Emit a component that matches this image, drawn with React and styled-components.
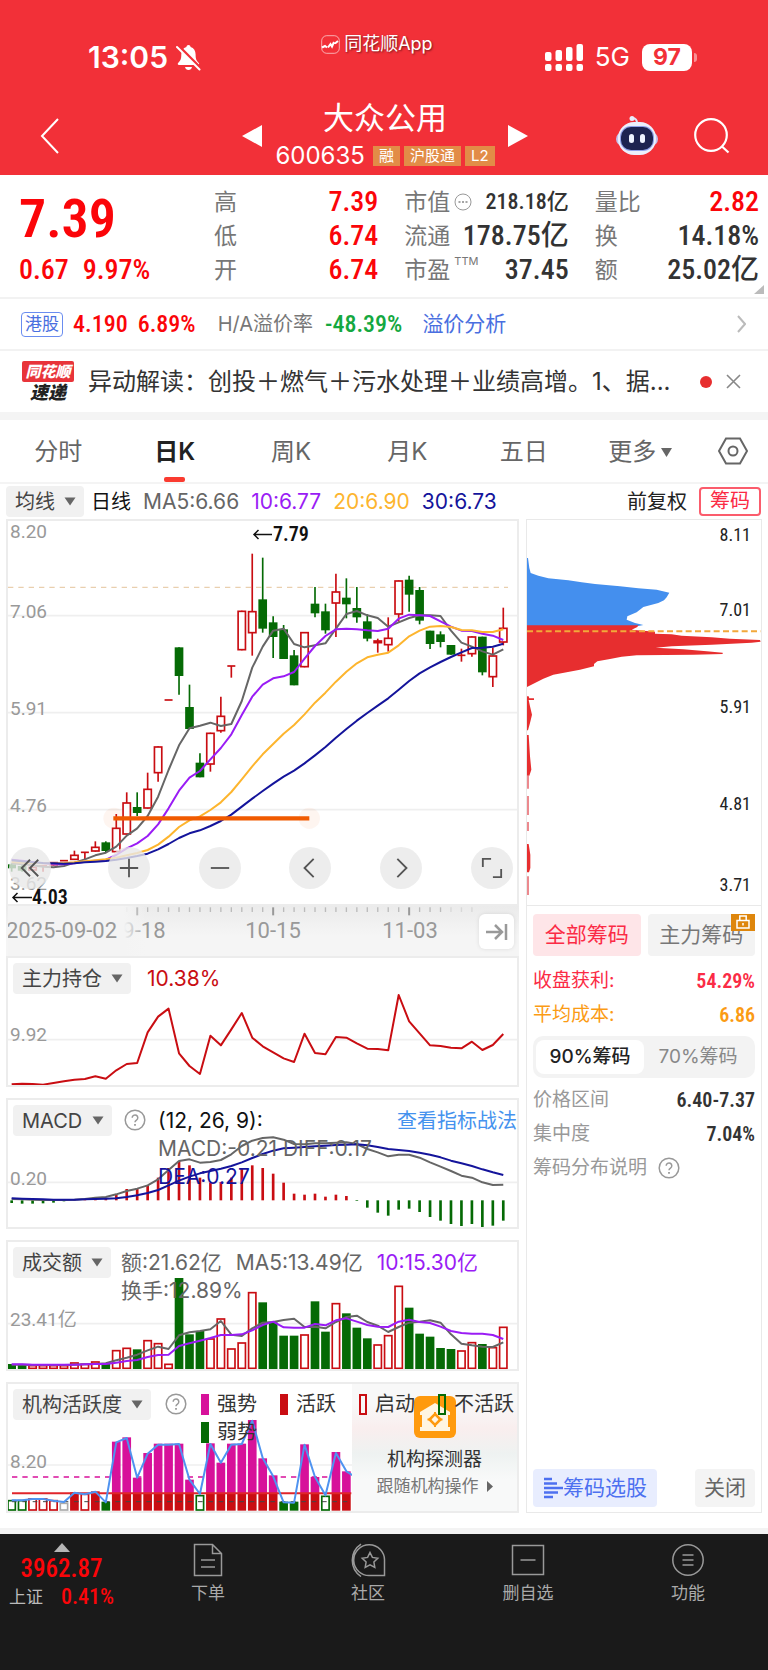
import React from "react";
import styled, { createGlobalStyle } from "styled-components";

// Data
const UP = "#c90d12";
const DOWN = "#056a05";

// type, body top, body bottom, high, low
const candles = [
  ["g", 1063, 1075, 1060, 1085],
  ["g", 1068, 1082, 1063, 1085],
  ["r", 1070, 1082, 1070, 1082],
  ["t", 1068, 1068, 1068, 1085],
  ["r", 1056, 1066, 1056, 1066],
  ["t", 1052, 1052, 1052, 1052],
  ["r", 1034, 1050, 1022, 1050],
  ["t", 1027, 1027, 1027, 1047],
  ["r", 1010, 1025, 994, 1025],
  ["g", 997, 1023, 994, 1028],
  ["r", 953, 1027, 912, 1027],
  ["r", 877, 974, 847, 974],
  ["g", 891, 909, 847, 918],
  ["r", 836, 896, 788, 896],
  ["r", 709, 790, 709, 815],
  ["t", 570, 570, 570, 570],
  ["g", 412, 498, 412, 554],
  ["g", 591, 657, 524, 657],
  ["g", 758, 802, 730, 802],
  ["r", 668, 764, 668, 785],
  ["r", 617, 664, 560, 668],
  ["t", 468, 468, 468, 503],
  ["r", 302, 421, 302, 421],
  ["r", 303, 370, 131, 437],
  ["g", 268, 356, 143, 368],
  ["g", 337, 381, 319, 444],
  ["g", 358, 447, 345, 447],
  ["g", 436, 526, 420, 526],
  ["r", 366, 472, 366, 472],
  ["g", 281, 310, 231, 322],
  ["g", 304, 361, 281, 371],
  ["r", 244, 281, 191, 381],
  ["g", 263, 283, 205, 325],
  ["g", 294, 322, 231, 338],
  ["g", 334, 386, 313, 394],
  ["r", 391, 400, 386, 428],
  ["r", 383, 406, 322, 425],
  ["r", 211, 314, 211, 335],
  ["g", 209, 254, 197, 305],
  ["g", 240, 332, 231, 343],
  ["g", 362, 402, 362, 417],
  ["g", 373, 396, 364, 412],
  ["g", 405, 434, 405, 434],
  ["t", 436, 436, 416, 455],
  ["r", 379, 433, 379, 440],
  ["g", 380, 487, 380, 496],
  ["r", 436, 502, 413, 531],
  ["r", 353, 398, 293, 406],
];
const ma5 = [1060, 1063, 1066, 1070, 1072, 1068, 1058, 1048, 1036, 1028, 1010, 977, 955, 918, 860, 780, 706, 655, 647, 638, 648, 642, 573, 473, 410, 362, 356, 402, 412, 406, 400, 356, 312, 303, 316, 324, 350, 337, 324, 316, 316, 318, 362, 398, 410, 424, 434, 418];
const ma10 = [1049, 1052, 1056, 1060, 1063, 1063, 1060, 1055, 1052, 1049, 1035, 1015, 1000, 978, 943, 895, 842, 803, 783, 748, 714, 673, 615, 560, 524, 505, 499, 486, 446, 408, 378, 358, 356, 358, 361, 363, 356, 326, 314, 316, 318, 334, 350, 362, 363, 371, 377, 390];
const ma20 = [1056, 1058, 1059, 1060, 1060, 1059, 1057, 1054, 1051, 1048, 1043, 1036, 1029, 1020, 1004, 980, 951, 931, 919, 900, 877, 846, 808, 769, 733, 702, 671, 645, 613, 578, 548, 515, 485, 460, 442, 434, 428, 406, 379, 362, 350, 348, 351, 360, 361, 366, 366, 358];
const ma30 = [1051, 1054, 1057, 1059, 1060, 1061, 1060, 1057, 1055, 1053, 1049, 1044, 1038, 1031, 1018, 1002, 984, 970, 961, 948, 933, 914, 890, 866, 843, 821, 800, 782, 760, 736, 711, 683, 657, 632, 609, 587, 565, 539, 513, 490, 472, 456, 441, 427, 414, 413, 410, 401];
const holdings = [570, 568, 569, 571, 566, 561, 556, 554, 546, 553, 528, 509, 506, 414, 367, 343, 477, 515, 539, 424, 453, 405, 356, 430, 456, 474, 492, 503, 418, 476, 480, 428, 430, 447, 463, 464, 468, 302, 381, 417, 453, 455, 460, 462, 442, 467, 452, 419];
const macd = [-8, -10, -10, -9, -7, -3, 1, 2, 4, 6, 17, 34, 35, 45, 68, 97, 118, 105, 68, 53, 55, 68, 95, 105, 97, 80, 53, 20, 17, 20, 11, 17, 13, -2, -22, -37, -46, -28, -25, -35, -50, -61, -71, -77, -71, -80, -76, -61];
const diff = [327, 328, 329, 330, 330, 330, 329, 327, 323, 321, 313, 303, 296, 286, 268, 240, 213, 208, 218, 216, 210, 193, 168, 152, 144, 142, 149, 162, 163, 160, 160, 158, 157, 162, 177, 187, 199, 194, 194, 203, 217, 230, 243, 257, 263, 277, 285, 284];
const dea = [325, 326, 327, 328, 329, 329, 329, 328, 327, 326, 325, 321, 316, 309, 300, 286, 272, 260, 250, 243, 236, 228, 217, 204, 192, 182, 175, 173, 171, 169, 167, 165, 164, 163, 166, 171, 177, 180, 183, 188, 194, 202, 212, 220, 228, 238, 247, 255];
const volume = "g388 g390 r391 r391 r391 r391 r383 r387 r380 g385 r346 r339 g344 r316 r325 r387 g130 g299 g289 r311 r251 r341 r323 r172 g203 g263 g303 g303 r299 g200 g291 r205 g236 g279 g311 r329 r301 r153 g219 g297 g306 g340 g343 r347 r322 g328 r337 r276".split(" ");
const volume5 = [390, 390, 391, 391, 391, 391, 390, 389, 388, 386, 377, 369, 360, 347, 336, 343, 302, 293, 289, 284, 259, 300, 304, 281, 264, 262, 256, 252, 277, 276, 281, 262, 247, 243, 262, 273, 292, 277, 264, 261, 257, 264, 299, 327, 332, 336, 337, 323];
const volume10 = [389, 389, 390, 390, 390, 390, 390, 389, 388, 388, 384, 379, 376, 367, 361, 360, 334, 326, 318, 310, 301, 301, 299, 287, 271, 261, 278, 279, 279, 268, 272, 257, 251, 261, 271, 276, 277, 261, 255, 262, 265, 276, 289, 295, 297, 297, 301, 313];
const activity = "G376 G376 R371 R371 R376 N384 r353 R357 r350 g381 m201 m188 m309 m235 m207 m207 m207 m315 G361 m206 m264 m207 m207 m136 m251 m302 g381 g381 m209 m307 G363 m232 m290".split(" ");
const activityLine = [377, 377, 373, 373, 378, 382, 354, 359, 351, 383, 203, 190, 309, 237, 210, 210, 208, 315, 358, 208, 264, 210, 208, 138, 250, 305, 383, 384, 210, 307, 362, 235, 290, 310];

const tabs = ["分时", "日K", "周K", "月K", "五日", "更多"];

// The series are stored at three units per pixel
const x = (i) => 11 + 31.38 * i;

const Line = ({ values, color }) => (
  <polyline
    points={values.map((v, i) => `${x(i)},${v}`).join(" ")}
    fill="none"
    stroke={color}
    strokeWidth="6"
    strokeLinejoin="round"
  />
);

const Plot = ({ top, height, children, labels }) => (
  <Picture viewBox={`0 0 509 ${height}`}>
    <g transform={`scale(0.33333) translate(0 ${-top})`}>{children}</g>
    {labels}
  </Picture>
);

const Hollow = ({ i, top, bottom, color = UP }) => (
  <rect x={x(i) - 11} y={top + 2} width="22" height={Math.max(bottom - top - 4, 3)} fill="#fff" stroke={color} strokeWidth="5" />
);

const Solid = ({ i, top, bottom, color }) => (
  <rect x={x(i) - 13} y={top} width="26" height={bottom - top} fill={color} />
);

const Select = ({ name }) => (
  <Picker>
    <select aria-label={name}>
      <option>{name}</option>
    </select>
    <svg width="12" height="9" viewBox="0 0 12 9">
      <path d="M0.500 0.500H11.500L6 8.500Z" fill="#666" />
    </svg>
  </Picker>
);

const Help = () => (
  <svg width="22" height="22" viewBox="0 0 22 22" fill="none" stroke="#999" strokeWidth="1.500">
    <circle cx="11" cy="11" r="9.800" />
    <path d="M8.200 8.800a2.800 2.800 0 1 1 4.300 2.300c-1 .7-1.500 1.100-1.500 2.200" />
    <path d="M11 15v1.700" strokeWidth="1.800" />
  </svg>
);

const GridLine = ({ y }) => <path d={`M0 ${y}H1527`} stroke="#efefef" strokeWidth="5" />;

const CandleChart = () => (
  <Plot
    top={33}
    height={383}
    labels={
      <>
        <AxisText x="2" y="17">8.20</AxisText>
        <AxisText x="2" y="97">7.06</AxisText>
        <AxisText x="2" y="194">5.91</AxisText>
        <AxisText x="2" y="291">4.76</AxisText>
        <AxisText x="2" y="369">3.62</AxisText>
        <path d="M246 13.500h18M250.500 9l-4.500 4.500 4.500 4.500" stroke="#111" strokeWidth="1.500" fill="none" />
        <MarkText x="265" y="20">7.79</MarkText>
        <path d="M5 376.500h19M9.500 372L5 376.500l4.500 4.500" stroke="#111" strokeWidth="1.500" fill="none" />
        <MarkText x="24" y="383">4.03</MarkText>
      </>
    }
  >
    {[317, 608, 899].map((y) => (
      <GridLine key={y} y={y} />
    ))}
    <path d="M0 232H1500" stroke="#e9cfae" strokeWidth="4" strokeDasharray="16 15" />
    {candles.map(([type, top, bottom, high, low], i) => (
      <g key={i}>
        <path d={`M${x(i)} ${high}V${low}`} stroke={type === "g" ? DOWN : UP} strokeWidth="5" />
        {type === "g" && <Solid i={i} top={top} bottom={bottom} color={DOWN} />}
        {type === "r" && <Hollow i={i} top={top} bottom={bottom} />}
        {type === "t" && <path d={`M${x(i) - 12} ${top}h24`} stroke={UP} strokeWidth="5" />}
      </g>
    ))}
    <Line values={ma5} color="#666" />
    <Line values={ma10} color="#9a1cf5" />
    <Line values={ma20} color="#fdb52e" />
    <Line values={ma30} color="#14149b" />
    <circle cx="318" cy="925" r="32" fill="#f05a00" opacity="0.06" />
    <circle cx="904" cy="925" r="32" fill="#f05a00" opacity="0.06" />
    <path d="M316 925H904" stroke="#f05a00" strokeWidth="13" />
  </Plot>
);

const DateAxis = () => (
  <Plot
    top={33}
    height={50}
    labels={
      <>
        <DateText x="102" y="32">09-18</DateText>
        <rect x="0" y="0" width="116" height="50" fill="#f4f4f4" />
        <rect x="116" y="0" width="22" height="50" fill="url(#fade)" />
        <DateText x="-2" y="32">2025-09-02</DateText>
        <DateText x="265" y="32" textAnchor="middle">10-15</DateText>
        <DateText x="402" y="32" textAnchor="middle">11-03</DateText>
      </>
    }
  >
    <defs>
      <linearGradient id="fade">
        <stop offset="0" stopColor="#f4f4f4" />
        <stop offset="1" stopColor="#f4f4f4" stopOpacity="0" />
      </linearGradient>
    </defs>
    {candles.map((_, i) =>
      i > 10 && i < 45 ? (
        <path
          key={i}
          d={`M${x(i)} 37v${i % 13 === 12 ? 24 : 14}`}
          stroke={i % 13 === 12 ? "#999" : "#bbb"}
          strokeWidth={i % 13 === 12 ? 6 : 4}
          opacity={i > 41 ? 0.4 : 1}
        />
      ) : null
    )}
  </Plot>
);

const HoldingsChart = () => (
  <Plot top={191} height={127} labels={<AxisText x="2" y="83">9.92</AxisText>}>
    <GridLine y={436} />
    <Line values={holdings} color={UP} />
  </Plot>
);

const MacdChart = () => (
  <Plot top={30} height={127} labels={<AxisText x="2" y="85">0.20</AxisText>}>
    <GridLine y={277} />
    {macd.map((v, i) => (
      <path key={i} d={`M${x(i)} 331v${-v}`} stroke={v > 0 ? UP : DOWN} strokeWidth="8" />
    ))}
    <Line values={diff} color="#666" />
    <Line values={dea} color="#14149b" />
  </Plot>
);

const VolumeChart = () => (
  <Plot top={22} height={127} labels={<AxisText x="2" y="84">23.41亿</AxisText>}>
    <GridLine y={267} />
    {volume.map((v, i) => {
      const top = Number(v.slice(1));
      return v[0] === "g" ? (
        <Solid key={i} i={i} top={top} bottom={403} color={DOWN} />
      ) : (
        <Hollow key={i} i={i} top={top} bottom={403} />
      );
    })}
    <Line values={volume5} color="#666" />
    <Line values={volume10} color="#9a1cf5" />
  </Plot>
);

const ActivityChart = () => (
  <Plot top={28} height={127} labels={<AxisText x="2" y="84">8.20</AxisText>}>
    <GridLine y={271} />
    <path d="M12 307H1030" stroke="#d7119a" strokeWidth="5" strokeDasharray="16 15" />
    {activity.map((v, i) => {
      const top = Number(v.slice(1));
      const type = v[0];
      if (type === "m") {
        return (
          <g key={i}>
            <Solid i={i} top={top} bottom={356} color="#d7119a" />
            <Solid i={i} top={356} bottom={408} color={UP} />
          </g>
        );
      }
      if (type === "r" || type === "g") {
        return <Solid key={i} i={i} top={top} bottom={408} color={type === "r" ? UP : DOWN} />;
      }
      return <Hollow key={i} i={i} top={top} bottom={408} color={{ G: DOWN, R: UP, N: "#aaa" }[type]} />;
    })}
    <path d="M12 356H1030" stroke="#e0252b" strokeWidth="6" />
    <path d="M12 381H1030" stroke="#444" strokeWidth="3" strokeDasharray="14 17" />
    <Line values={activityLine} color="#4f93f0" />
  </Plot>
);

const ChipChart = () => (
  <Picture viewBox="0 0 234 385">
    <g transform="scale(0.33333) translate(-21 -31)">
      <path d="M21 145H24L28 175L32 190L55 198L85 206L145 212L185 218L225 223L300 230L355 236L410 240L448 249L440 263L432 272L415 280L370 292L350 308L322 320L320 330L345 340L370 346L355 349H21Z" fill="#448fee" />
      <path d="M21 347H355L352 352L335 360L405 366V372L455 374L485 378L575 383L630 387L720 391L722 396L695 399L575 405L455 410L407 414L490 419L560 425L608 429V433L520 435L350 437L305 441L270 448L232 455L222 463V470L180 480L100 495L70 507L21 532Z" fill="#e72e2f" />
      <path d="M21 560H26L28 566H42V571H26L30 590L36 615L30 640L24 662H21ZM21 676H26L30 740L34 780L28 798H21ZM21 1003H26L31 1035V1075L27 1088H21Z" fill="#e72e2f" />
      <path d="M24 798V837M24 859V916M24 937V964M24 1100V1156" stroke="#e97379" strokeWidth="5" />
      <path d="M21 365H722" stroke="#f2a83a" strokeWidth="6" strokeDasharray="18 10" />
    </g>
    <PriceText x="224" y="21">8.11</PriceText>
    <PriceText x="224" y="96">7.01</PriceText>
    <PriceText x="224" y="193">5.91</PriceText>
    <PriceText x="224" y="290">4.81</PriceText>
    <PriceText x="224" y="371">3.71</PriceText>
  </Picture>
);

const Header = () => (
  <RedHeader>
    <StatusBar>
      <Clock>
        13:05
        <svg width="25" height="27" viewBox="0 0 25 27">
          <path d="M12.500 1c1.200 0 2 .8 2.100 2 3.400 1 5 3.900 5 7.500 0 5 1.200 6.600 3.200 8.500.8.900.3 2-.8 2H3c-1.200 0-1.700-1.100-.9-2 2-1.900 3.200-3.500 3.200-8.500 0-3.600 1.700-6.500 5.100-7.500.1-1.200.9-2 2.100-2Z" fill="#fff" />
          <path d="M9 23h7c-.4 1.900-1.700 3-3.500 3S9.400 24.900 9 23Z" fill="#fff" />
          <path d="M2.500 2L25 24.500" stroke="#f23038" strokeWidth="3" />
          <path d="M1 3L23.500 25.500" stroke="#fff" strokeWidth="2" strokeLinecap="round" />
        </svg>
      </Clock>
      <AppTag>
        <svg width="19" height="19" viewBox="0 0 19 19" fill="none" stroke="#fff">
          <rect x="0.700" y="0.700" width="17.600" height="17.600" rx="5" strokeOpacity="0.600" />
          <path d="M1 12.500l3-1.500 2 1.500M7 12.500l2.500-3.500 1.500 2.500 2-4.500M14 8.500l3-2.500" strokeWidth="2" />
        </svg>
        同花顺App
      </AppTag>
      <Signals>
        <svg width="38" height="27" viewBox="0 0 38 27" fill="#fff">
          {[0, 1, 2, 3].map((i) => (
            <g key={i}>
              <rect x={i * 10.500} y="20" width="6.500" height="7" rx="2" />
              <rect x={i * 10.500} y={[8, 6, 3, 0][i]} width="6.500" height={[9, 11, 14, 17][i]} rx="2" />
            </g>
          ))}
        </svg>
        <Network>5G</Network>
        <Battery>97</Battery>
      </Signals>
    </StatusBar>
    <TitleBar>
      <IconButton aria-label="返回">
        <svg width="20" height="36" viewBox="0 0 20 36" fill="none" stroke="#fff" strokeWidth="2">
          <path d="M18 1L2 18l16 17" />
        </svg>
      </IconButton>
      <StockSwitch>
        <IconButton aria-label="上一只">
          <svg width="20" height="22" viewBox="0 0 20 22"><path d="M20 0v22L0 11Z" fill="#fff" /></svg>
        </IconButton>
        <div>
          <StockName>大众公用</StockName>
          <StockCode>
            600635 <Badge>融</Badge>
            <Badge>沪股通</Badge>
            <Badge>L2</Badge>
          </StockCode>
        </div>
        <IconButton aria-label="下一只">
          <svg width="20" height="22" viewBox="0 0 20 22"><path d="M0 0v22L20 11Z" fill="#fff" /></svg>
        </IconButton>
      </StockSwitch>
      <TitleActions>
        <IconButton aria-label="助手">
          <svg width="42" height="40" viewBox="0 0 42 40">
            <path d="M21 7c0-3-1-4.500-4-5" stroke="#dfe3f6" strokeWidth="2" fill="none" />
            <circle cx="16" cy="2.500" r="2.500" fill="#e9ecfb" />
            <rect x="0" y="16" width="42" height="14" rx="7" fill="#c4c2ee" />
            <rect x="2" y="6" width="38" height="33" rx="16" fill="#eceffc" />
            <rect x="4" y="10" width="34" height="25" rx="11" fill="#8fa0e8" />
            <rect x="5" y="11" width="32" height="23" rx="10" fill="#1d2350" />
            <rect x="13" y="18" width="5" height="9" rx="2.500" fill="#eef3ff" />
            <rect x="24" y="18" width="5" height="9" rx="2.500" fill="#eef3ff" />
          </svg>
        </IconButton>
        <IconButton aria-label="搜索">
          <svg width="36" height="36" viewBox="0 0 36 36" fill="none" stroke="#fff" strokeWidth="2.200">
            <circle cx="17" cy="17" r="15.800" />
            <path d="M28 28.500l6.500 6" />
          </svg>
        </IconButton>
      </TitleActions>
    </TitleBar>
  </RedHeader>
);

const BottomNav = () => (
  <NavBar>
    <IndexQuote>
      <svg width="16" height="9" viewBox="0 0 16 9"><path d="M0 9h16L8 0Z" fill="#b5b5b5" /></svg>
      <strong>3962.87</strong>
      <p>
        上证 <b>0.41%</b>
      </p>
    </IndexQuote>
    <NavItem href="#order">
      <svg width="32" height="34" viewBox="0 0 32 34">
        <path d="M2.500 1.500h18l9 9v22h-27ZM20.500 1.500v9h9M9 17h14M9 24h14" />
      </svg>
      下单
    </NavItem>
    <NavItem href="#community">
      <svg width="36" height="34" viewBox="0 0 36 34">
        <path d="M34.500 32.500h-14A15.400 15.400 0 1 1 34.500 18ZM11 1A19.500 19.500 0 0 0 11 33.500" />
        <path d="M20 9.500l2.400 4.900 5.400.8-3.900 3.800.9 5.400-4.800-2.600-4.800 2.600.9-5.400-3.900-3.800 5.400-.8Z" />
      </svg>
      社区
    </NavItem>
    <NavItem href="#watchlist">
      <svg width="34" height="34" viewBox="0 0 34 34">
        <path d="M1.500 2.500h31v29h-31ZM9.500 17h15" />
      </svg>
      删自选
    </NavItem>
    <NavItem href="#tools">
      <svg width="34" height="34" viewBox="0 0 34 34">
        <circle cx="17" cy="17" r="15.200" />
        <path d="M11.500 12h11M11.500 17h11M11.500 22h11" />
      </svg>
      功能
    </NavItem>
  </NavBar>
);

const App = () => {
  return (
    <Page>
      <GlobalStyle />
      <Header />

      <Quote>
        <div>
          <BigPrice>7.39</BigPrice>
          <Change>
            <span>0.67</span>
            <span>9.97%</span>
          </Change>
        </div>
        <div>
          <Stat $up><span>高</span><b>7.39</b></Stat>
          <Stat $up><span>低</span><b>6.74</b></Stat>
          <Stat $up><span>开</span><b>6.74</b></Stat>
        </div>
        <div>
          <Stat $small>
            <span>
              市值
              <svg width="18" height="18" viewBox="0 0 18 18">
                <circle cx="9" cy="9" r="8" fill="none" stroke="#999" />
                <path d="M4.500 9h2M8 9h2M11.500 9h2" stroke="#888" strokeWidth="1.600" />
              </svg>
            </span>
            <b>218.18亿</b>
          </Stat>
          <Stat><span>流通</span><b>178.75亿</b></Stat>
          <Stat><span>市盈<sup>TTM</sup></span><b>37.45</b></Stat>
        </div>
        <div>
          <Stat $up><span>量比</span><b>2.82</b></Stat>
          <Stat><span>换</span><b>14.18%</b></Stat>
          <Stat><span>额</span><b>25.02亿</b></Stat>
        </div>
        <Corner width="10" height="9" viewBox="0 0 10 9"><path d="M10 0v9H0Z" fill="#bbb" /></Corner>
      </Quote>

      <HkRow>
        <HkTag>港股</HkTag>
        <Num $color="#fb0509">4.190</Num>
        <Num $color="#fb0509">6.89%</Num>
        <Premium>H/A溢价率</Premium>
        <Num $color="#14a840">-48.39%</Num>
        <a href="#premium">溢价分析</a>
        <svg width="9" height="18" viewBox="0 0 9 18" fill="none" stroke="#bbb" strokeWidth="2"><path d="M1 1l7 8-7 8" /></svg>
      </HkRow>

      <Notice>
        <NewsLogo>
          <span>同花顺</span>
          <em>速递</em>
        </NewsLogo>
        <p>异动解读：创投＋燃气＋污水处理＋业绩高增。1、据...</p>
        <Dot />
        <IconButton aria-label="关闭提醒">
          <svg width="15" height="15" viewBox="0 0 15 15" stroke="#888" strokeWidth="1.600"><path d="M1 1l13 13M14 1L1 14" /></svg>
        </IconButton>
      </Notice>

      <Tabs>
        {tabs.map((tab) => (
          <Tab key={tab} $active={tab === "日K"}>
            {tab}
            {tab === "更多" && <svg width="11" height="9" viewBox="0 0 11 9"><path d="M0 0h11L5.500 9Z" fill="#666" /></svg>}
          </Tab>
        ))}
        <SettingsButton aria-label="设置">
          <svg width="30" height="28" viewBox="0 0 30 28" fill="none" stroke="#666" strokeWidth="2">
            <path d="M8 1.500h14L29 14l-7 12.500H8L1 14Z" />
            <circle cx="15" cy="14" r="4.500" />
          </svg>
        </SettingsButton>
      </Tabs>

      <AverageRow>
        <Select name="均线" />
        <Period>日线</Period>
        <Tint $color="#666">MA5:6.66</Tint>
        <Tint $color="#9a1cf5">10:6.77</Tint>
        <Tint $color="#fdb52e">20:6.90</Tint>
        <Tint $color="#14149b">30:6.73</Tint>
        <Adjust>前复权</Adjust>
        <ChipButton>筹码</ChipButton>
      </AverageRow>

      <Columns>
        <Charts>
          <ChartFrame>
            <CandleChart />
            <Controls>
              <RoundButton aria-label="最早"><svg viewBox="0 0 24 24"><path d="M12 3l-9 9 9 9M21 3l-9 9 9 9" /></svg></RoundButton>
              <RoundButton aria-label="放大"><svg viewBox="0 0 24 24"><path d="M12 2v20M2 12h20" /></svg></RoundButton>
              <RoundButton aria-label="缩小"><svg viewBox="0 0 24 24"><path d="M2 12h20" /></svg></RoundButton>
              <RoundButton aria-label="左移"><svg viewBox="0 0 24 24"><path d="M16 2L6 12l10 10" /></svg></RoundButton>
              <RoundButton aria-label="右移"><svg viewBox="0 0 24 24"><path d="M8 2l10 10L8 22" /></svg></RoundButton>
              <RoundButton aria-label="全屏"><svg viewBox="0 0 24 24"><path d="M2 11V2h9M22 13v9h-9" /></svg></RoundButton>
            </Controls>
          </ChartFrame>
          <DateRow>
            <DateAxis />
            <LatestButton aria-label="最新">
              <svg width="22" height="18" viewBox="0 0 22 18" fill="none" stroke="#999" strokeWidth="2.500"><path d="M0 9h15M9 2l7 7-7 7M20 1v16" /></svg>
            </LatestButton>
          </DateRow>
          <Panels>
            <ChartFrame>
              <HoldingsChart />
              <PanelHead $gap={16}>
                <Select name="主力持仓" />
                <Tint $color={UP}>10.38%</Tint>
              </PanelHead>
            </ChartFrame>
            <ChartFrame>
              <MacdChart />
              <PanelHead $gap={12}>
                <Select name="MACD" />
                <Help />
                <Readings>
                  <Tint $color="#111">(12, 26, 9):</Tint>
                  <Tint $color="#666">MACD:-0.21 DIFF:0.17</Tint>
                  <Tint $color="#14149b">DEA:0.27</Tint>
                </Readings>
                <GuideLink href="#guide">查看指标战法</GuideLink>
              </PanelHead>
            </ChartFrame>
            <ChartFrame>
              <VolumeChart />
              <PanelHead $gap={10}>
                <Select name="成交额" />
                <Readings>
                  <ReadingLine>
                    <Tint $color="#666">额:21.62亿</Tint>
                    <Tint $color="#666">MA5:13.49亿</Tint>
                    <Tint $color="#9a1cf5">10:15.30亿</Tint>
                  </ReadingLine>
                  <Tint $color="#666">换手:12.89%</Tint>
                </Readings>
              </PanelHead>
            </ChartFrame>
            <ChartFrame>
              <ActivityChart />
              <Promo href="#detector">
                <svg width="42" height="42" viewBox="0 0 42 42">
                  <rect width="42" height="42" rx="6" fill="#ff9a0e" />
                  <path d="M21 7L36 16v3h-2v12h2v4H6v-4h2V19H6v-3Z" fill="#fff5e2" />
                  <path d="M21 18l5.500 5.500L21 29l-5.500-5.500Z" fill="none" stroke="#ff9a0e" strokeWidth="2.500" />
                  <path d="M21 16v4M21 27v4M13.500 23.500h4M24.500 23.500h4" stroke="#ff9a0e" strokeWidth="2" />
                </svg>
                <strong>机构探测器</strong>
                <span>
                  跟随机构操作
                  <svg width="6" height="11" viewBox="0 0 6 11"><path d="M0 0v11l6-5.500Z" fill="#666" /></svg>
                </span>
              </Promo>
              <PanelHead $gap={14}>
                <Select name="机构活跃度" />
                <Help />
                <Legend>
                  <li><Marker $color="#d7119a" $filled />强势</li>
                  <li><Marker $color={UP} $filled />活跃</li>
                  <li><Marker $color={UP} />启动</li>
                  <li><Marker $color={DOWN} />不活跃</li>
                  <li><Marker $color={DOWN} $filled />弱势</li>
                </Legend>
              </PanelHead>
            </ChartFrame>
          </Panels>
        </Charts>

        <ChipPanel>
          <ChipChart />
          <ChipInfo>
            <ChipTypes>
              <TypeButton $active>全部筹码</TypeButton>
              <TypeButton>
                主力筹码
                <Lock>
                  <svg width="16" height="14" viewBox="0 0 16 14" fill="none" stroke="#fff" strokeWidth="1.500">
                    <path d="M2 5.500h12v7.500H2ZM4.800 5.500V1h6.400v4.500M8 8v2.500" />
                  </svg>
                </Lock>
              </TypeButton>
            </ChipTypes>
            <InfoRow $color="#fb2b45"><span>收盘获利:</span><b>54.29%</b></InfoRow>
            <InfoRow $color="#fb9b14"><span>平均成本:</span><b>6.86</b></InfoRow>
            <Segment>
              <SegmentButton $active>90%筹码</SegmentButton>
              <SegmentButton>70%筹码</SegmentButton>
            </Segment>
            <InfoRow><span>价格区间</span><b>6.40-7.37</b></InfoRow>
            <InfoRow><span>集中度</span><b>7.04%</b></InfoRow>
            <InfoRow $start><span>筹码分布说明</span><Help /></InfoRow>
            <ChipActions>
              <ActionButton $primary>
                <svg width="20" height="22" viewBox="0 0 20 22" stroke="#4d70f0" strokeWidth="2.500">
                  <path d="M1 2h8M1 6.500h13M1 11h19M1 15.500h14M1 20h9" />
                </svg>
                筹码选股
              </ActionButton>
              <ActionButton>关闭</ActionButton>
            </ChipActions>
          </ChipInfo>
        </ChipPanel>
      </Columns>

      <BottomNav />
    </Page>
  );
};

const GlobalStyle = createGlobalStyle`
  * {
    margin: 0;
    padding: 0;
    box-sizing: border-box;
  }
  body {
    background: #fff;
    color: #333;
    font-family: Inter, "Noto Sans CJK SC", sans-serif;
    font-size: 20px;
    line-height: 28px;
  }
  button, select {
    border: none;
    background: none;
    color: inherit;
    font: inherit;
    white-space: nowrap;
  }
  a {
    text-decoration: none;
  }
  svg {
    display: block;
    flex-shrink: 0;
  }
`;

const numbers = `"Roboto Condensed", "Noto Sans CJK SC", sans-serif`;
const axis = `Roboto, "Noto Sans CJK SC", sans-serif`;

const Page = styled.div`
  display: flex;
  flex-direction: column;
  min-height: 100vh;
`;

const Picture = styled.svg`
  width: 100%;
  height: auto;
`;

const AxisText = styled.text`
  font-family: ${axis};
  font-size: 19px;
  fill: #999;
`;

const DateText = styled(AxisText)`
  font-size: 22px;
`;

const MarkText = styled.text`
  font-family: ${numbers};
  font-size: 20px;
  font-weight: 600;
  fill: #111;
`;

const PriceText = styled.text`
  font-family: ${numbers};
  font-size: 18px;
  fill: #222;
  text-anchor: end;
`;

// Header
const RedHeader = styled.header`
  background: #f23038;
  color: #fff;
`;

const StatusBar = styled.div`
  display: flex;
  justify-content: space-between;
  height: 80px;
  padding: 34px 76px 0 88px;
`;

const Clock = styled.div`
  display: flex;
  align-items: center;
  gap: 8px;
  font-size: 30px;
  font-weight: 600;
`;

const AppTag = styled.div`
  display: flex;
  align-items: center;
  gap: 4px;
  height: 20px;
  padding-left: 8px;
  font-size: 18px;
  text-shadow: 1px 1px 2px rgba(0, 0, 0, 0.5);
`;

const Signals = styled.div`
  display: flex;
  align-items: center;
  gap: 12px;
`;

const Network = styled.span`
  font-size: 26px;
`;

const Battery = styled.span`
  position: relative;
  width: 50px;
  border-radius: 8px;
  background: #fff;
  color: #f23038;
  font-size: 23px;
  font-weight: 700;
  line-height: 27px;
  text-align: center;
  &::after {
    content: "";
    position: absolute;
    top: 9px;
    right: -5px;
    width: 3px;
    height: 9px;
    border-radius: 0 3px 3px 0;
    background: #f98f93;
  }
`;

const TitleBar = styled.div`
  display: grid;
  grid-template-columns: 1fr auto 1fr;
  align-items: center;
  height: 95px;
  padding: 21px 38px 4px 40px;
`;

const IconButton = styled.button`
  display: flex;
  align-items: center;
  cursor: pointer;
`;

const StockSwitch = styled.div`
  display: flex;
  align-items: center;
  gap: 13px;
`;

const StockName = styled.h1`
  font-size: 31px;
  font-weight: 400;
  line-height: 34px;
  text-align: center;
`;

const StockCode = styled.div`
  display: flex;
  align-items: center;
  gap: 4px;
  margin-top: 8px;
  padding-bottom: 2px;
  font-size: 24px;
  line-height: 26px;
`;

const Badge = styled.span`
  padding: 0 6px;
  background: #e28c47;
  font-size: 15px;
  line-height: 20px;
  &:first-of-type {
    margin-left: 4px;
  }
`;

const TitleActions = styled.div`
  display: flex;
  align-items: center;
  justify-content: flex-end;
  gap: 36px;
`;

// Quote
const Quote = styled.section`
  position: relative;
  display: grid;
  grid-template-columns: 169px 1fr 1fr 1fr;
  gap: 26px;
  padding: 10px 9px;
  padding-left: 19px;
  border-bottom: 2px solid #f2f2f2;
`;

const BigPrice = styled.strong`
  display: block;
  color: #fb0509;
  font-family: ${numbers};
  font-size: 54px;
  font-weight: 600;
  line-height: 68px;
`;

const Change = styled.div`
  display: flex;
  gap: 14px;
  color: #fb0509;
  font-family: ${numbers};
  font-size: 28px;
  font-weight: 500;
  line-height: 34px;
`;

const Stat = styled.div`
  display: flex;
  justify-content: space-between;
  align-items: center;
  height: 34px;
  span {
    display: flex;
    align-items: center;
    gap: 4px;
    color: #777;
    font-size: 23px;
  }
  sup {
    align-self: flex-start;
    font-size: 11px;
    line-height: 11px;
  }
  b {
    color: ${({ $up }) => ($up ? "#fb0509" : "#333")};
    font-family: ${numbers};
    font-size: ${({ $small }) => ($small ? 22 : 28)}px;
    font-weight: 500;
  }
`;

const Corner = styled.svg`
  position: absolute;
  right: 4px;
  bottom: 3px;
`;

const HkRow = styled.section`
  display: flex;
  align-items: center;
  height: 52px;
  padding: 0 22px 0 21px;
  border-bottom: 2px solid #f2f2f2;
  a {
    flex: 1;
    color: #4a6fe0;
    font-size: 21px;
  }
`;

const HkTag = styled.span`
  padding: 0 3px;
  margin-right: 10px;
  border: 1px solid #6a8df0;
  border-radius: 4px;
  color: #4a6fe0;
  font-size: 17px;
  line-height: 23px;
`;

const Num = styled.span`
  margin-right: 10px;
  color: ${({ $color }) => $color};
  font-family: ${numbers};
  font-size: 24px;
  font-weight: 500;
  & + a {
    margin-left: 10px;
  }
`;

const Premium = styled.span`
  margin: 0 12px;
  color: #777;
`;

const Notice = styled.section`
  display: flex;
  align-items: center;
  height: 69px;
  padding: 0 27px 0 22px;
  border-bottom: 8px solid #f4f4f4;
  p {
    flex: 1;
    margin-left: 14px;
    overflow: hidden;
    font-size: 24px;
    line-height: 34px;
    white-space: nowrap;
  }
`;

const NewsLogo = styled.div`
  width: 52px;
  font-style: italic;
  font-weight: 900;
  text-align: center;
  span {
    display: block;
    border-radius: 2px;
    background: #e8343a;
    color: #fff;
    font-size: 15px;
    line-height: 21px;
  }
  em {
    display: block;
    color: #222;
    font-size: 18px;
    line-height: 21px;
  }
`;

const Dot = styled.i`
  width: 12px;
  height: 12px;
  margin: 0 14px 0 24px;
  border-radius: 50%;
  background: #e72e2f;
`;

// Tabs
const Tabs = styled.nav`
  display: flex;
  height: 64px;
  border-bottom: 2px solid #f4f4f4;
`;

const Tab = styled.button`
  position: relative;
  display: flex;
  flex: 117;
  align-items: center;
  justify-content: center;
  gap: 5px;
  padding-top: 2px;
  color: ${({ $active }) => ($active ? "#222" : "#666")};
  font-size: 24px;
  font-weight: ${({ $active }) => ($active ? 600 : 400)};
  &::after {
    content: "";
    position: absolute;
    bottom: 0;
    width: 21px;
    height: 5px;
    border-radius: 2px;
    background: ${({ $active }) => ($active ? "#fa3b30" : "none")};
  }
`;

const SettingsButton = styled(IconButton)`
  flex: 70;
  justify-content: center;
`;

const Picker = styled.label`
  position: relative;
  display: flex;
  align-items: center;
  svg {
    position: absolute;
    right: 8px;
    pointer-events: none;
  }
  select {
    height: 31px;
    padding: 0 29px 0 9px;
    border-radius: 4px;
    background: #f1f1f1;
    color: #444;
    appearance: none;
  }
`;

const Tint = styled.span`
  color: ${({ $color }) => $color};
  font-size: 21px;
`;

const AverageRow = styled.div`
  display: flex;
  align-items: center;
  gap: 12px;
  height: 35px;
  padding: 0 7px 0 6px;
  ${Picker} {
    margin-right: -5px;
  }
`;

const Period = styled.span`
  color: #111;
`;

const Adjust = styled.button`
  margin-left: auto;
  color: #222;
`;

const ChipButton = styled.button`
  padding: 0 9px;
  border: 2px solid #fb5c6c;
  border-radius: 4px;
  color: #fb2b45;
  line-height: 25px;
`;

// Charts
const Columns = styled.main`
  display: grid;
  grid-template-columns: 513fr 236fr;
  gap: 7px;
  padding: 0 6px 15px;
  border-bottom: 6px solid #f3f3f3;
`;

const Charts = styled.div`
  min-width: 0;
`;

const ChartFrame = styled.section`
  position: relative;
  border: 2px solid #ececec;
`;

const Controls = styled.div`
  position: absolute;
  right: 4px;
  bottom: 15px;
  left: 1px;
  display: flex;
  justify-content: space-between;
`;

const RoundButton = styled.button`
  display: flex;
  align-items: center;
  justify-content: center;
  width: 42px;
  height: 42px;
  border-radius: 50%;
  background: rgba(232, 232, 232, 0.8);
  &:first-child {
    margin-right: 8px;
  }
  svg {
    width: 22px;
    height: 22px;
    fill: none;
    stroke: #555;
    stroke-width: 2;
  }
`;

const DateRow = styled.div`
  position: relative;
  padding: 0 2px;
  background: linear-gradient(#ebebeb, #f5f5f5 60%);
`;

const LatestButton = styled.button`
  position: absolute;
  top: 8px;
  right: 5px;
  display: flex;
  align-items: center;
  justify-content: center;
  width: 35px;
  height: 35px;
  border-radius: 6px;
  background: #fff;
  box-shadow: 0 0 4px rgba(0, 0, 0, 0.1);
`;

const Panels = styled.div`
  display: grid;
  gap: 11px;
`;

const PanelHead = styled.div`
  position: absolute;
  top: 5px;
  right: 0;
  left: 5px;
  display: flex;
  align-items: flex-start;
  gap: ${({ $gap }) => $gap}px;
  > svg {
    margin-top: 4px;
  }
  > ${Tint} {
    margin-top: 2px;
  }
`;

const Readings = styled.div`
  display: flex;
  flex-direction: column;
  padding-top: 2px;
  white-space: nowrap;
`;

const ReadingLine = styled.div`
  display: flex;
  gap: 14px;
`;

const GuideLink = styled.a`
  position: absolute;
  top: 2px;
  right: 0;
  color: #4592ee;
`;

const Legend = styled.ul`
  display: flex;
  flex-wrap: wrap;
  column-gap: 23px;
  padding-top: 1px;
  list-style: none;
  li {
    display: flex;
    align-items: center;
    gap: 8px;
    color: #333;
  }
`;

const Marker = styled.i`
  width: 8px;
  height: 21px;
  border: 2px solid ${({ $color }) => $color};
  background: ${({ $color, $filled }) => ($filled ? $color : "none")};
`;

const Promo = styled.a`
  position: absolute;
  top: 0;
  right: 0;
  bottom: 0;
  display: flex;
  flex-direction: column;
  align-items: center;
  width: 165px;
  padding-top: 12px;
  background: linear-gradient(#f8f8f8 15%, #f9eeee 35%, #eef2f1 55%, #f8f9f9 75%);
  strong {
    margin-top: 8px;
    color: #333;
    font-size: 19px;
    font-weight: 400;
  }
  span {
    display: flex;
    align-items: center;
    gap: 8px;
    color: #777;
    font-size: 17px;
    line-height: 24px;
  }
`;

// Chip distribution
const ChipPanel = styled.aside`
  display: flex;
  flex-direction: column;
  border: 1px solid #e9e9e9;
`;

const ChipInfo = styled.div`
  display: flex;
  flex: 1;
  flex-direction: column;
  padding: 8px 6px 5px;
  border-top: 1px solid #e9e9e9;
`;

const ChipTypes = styled.div`
  display: grid;
  grid-template-columns: 1fr 1fr;
  gap: 7px;
  margin-bottom: 8px;
`;

const TypeButton = styled.button`
  position: relative;
  height: 42px;
  border-radius: 4px;
  background: ${({ $active }) => ($active ? "#fee5e8" : "#f3f3f3")};
  color: ${({ $active }) => ($active ? "#fb2b45" : "#777")};
  font-size: 21px;
`;

const Lock = styled.span`
  position: absolute;
  top: 0;
  right: 0;
  padding: 1px 4px 2px;
  background: #de860c;
`;

const InfoRow = styled.div`
  display: flex;
  align-items: center;
  justify-content: ${({ $start }) => ($start ? "flex-start" : "space-between")};
  gap: 11px;
  height: 34px;
  color: ${({ $color }) => $color || "#999"};
  font-size: 19px;
  b {
    color: ${({ $color }) => $color || "#333"};
    font-family: ${numbers};
    font-size: 20px;
    font-weight: 600;
  }
`;

const Segment = styled.div`
  display: grid;
  grid-template-columns: 1fr 1fr;
  height: 42px;
  margin: 4px 0 5px;
  padding: 4px 3px;
  border-radius: 10px;
  background: #f3f3f3;
`;

const SegmentButton = styled.button`
  border-radius: 8px;
  background: ${({ $active }) => ($active ? "#fff" : "none")};
  color: ${({ $active }) => ($active ? "#222" : "#888")};
  font-size: 19px;
  font-weight: ${({ $active }) => ($active ? 500 : 400)};
`;

const ChipActions = styled.div`
  display: flex;
  justify-content: space-between;
  margin-top: auto;
`;

const ActionButton = styled.button`
  display: flex;
  align-items: center;
  height: 38px;
  padding: 0 ${({ $primary }) => ($primary ? 10 : 9)}px;
  border-radius: 4px;
  background: ${({ $primary }) => ($primary ? "#e8edfe" : "#f4f4f4")};
  color: ${({ $primary }) => ($primary ? "#4d70f0" : "#666")};
  font-size: 21px;
`;

// Bottom navigation
const NavBar = styled.footer`
  display: flex;
  flex: 1;
  align-items: flex-start;
  padding-top: 9px;
  background: #1a1a1a;
`;

const IndexQuote = styled.div`
  display: flex;
  flex-direction: column;
  align-items: center;
  width: 123px;
  margin-right: 5px;
  font-family: ${numbers};
  color: #fb0509;
  strong {
    margin-top: 3px;
    font-size: 25px;
    font-weight: 500;
  }
  p {
    display: flex;
    align-items: center;
    gap: 18px;
    color: #bbb;
    font-size: 17px;
  }
  b {
    color: #fb0509;
    font-size: 22px;
    font-weight: 500;
  }
`;

const NavItem = styled.a`
  display: flex;
  flex: 1;
  flex-direction: column;
  align-items: center;
  gap: 2px;
  color: #aaa;
  font-size: 17px;
  svg {
    fill: none;
    stroke: #999;
    stroke-width: 1.5;
  }
`;

export default App;
